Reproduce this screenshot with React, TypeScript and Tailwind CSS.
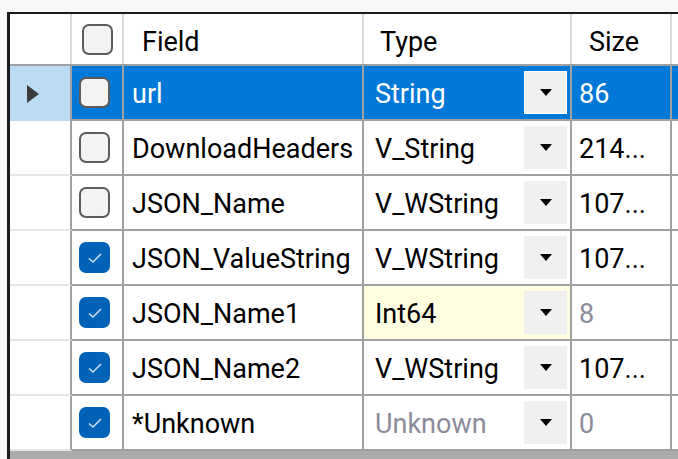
import React from 'react'

type Row = {
  checked: boolean
  field: string
  type: string
  size: string
  dim?: boolean
  yellow?: boolean
  sizeDim?: boolean
}

const ROWS: Row[] = [
  { checked: false, field: 'url', type: 'String', size: '86' },
  { checked: false, field: 'DownloadHeaders', type: 'V_String', size: '214...' },
  { checked: false, field: 'JSON_Name', type: 'V_WString', size: '107...' },
  { checked: true, field: 'JSON_ValueString', type: 'V_WString', size: '107...' },
  { checked: true, field: 'JSON_Name1', type: 'Int64', size: '8', yellow: true, sizeDim: true },
  { checked: true, field: 'JSON_Name2', type: 'V_WString', size: '107...' },
  { checked: true, field: '*Unknown', type: 'Unknown', size: '0', dim: true, sizeDim: true },
]

function CheckBox({ checked }: { checked: boolean }) {
  if (checked) {
    return (
      <div className="w-[31px] h-[31px] rounded-[7px] bg-[#0063b8] flex items-center justify-center">
        <svg width="16" height="12" viewBox="0 0 16 12">
          <path d="M2 6.5 L6 10 L14 2" fill="none" stroke="#c9dcf2" strokeWidth="1.6" />
        </svg>
      </div>
    )
  }
  return <div className="w-[31px] h-[31px] rounded-[7px] border-2 border-[#5c5c5c] bg-[#f3f3f3]" />
}

function Arrow() {
  return (
    <svg width="12" height="7" viewBox="0 0 12 7">
      <path d="M0 0 H12 L6 7 Z" fill="#000" />
    </svg>
  )
}

export default function App() {
  return (
    <div className="w-[678px] h-[459px] bg-[#f7f8fa] pt-[12px] pl-[7px] overflow-hidden" style={{ fontFamily: 'Roboto, sans-serif' }}>
      <div className="border-l-[3px] border-t-2 border-[#1c1c1c] bg-white h-[447px] flex flex-col text-[27px] leading-none text-black">
        <div className="flex h-[52px] shrink-0 border-b-2 border-[#a0a0a0]">
          <div className="w-[62px] border-r-2 border-[#d9d9d9]" />
          <div className="w-[52px] border-r-2 border-[#d9d9d9] flex items-center pl-[10px]">
            <CheckBox checked={false} />
          </div>
          <div className="w-[240px] border-r-2 border-[#d9d9d9] flex items-center pl-[18px] pt-[6px]">Field</div>
          <div className="w-[208px] border-r-2 border-[#d9d9d9] flex items-center pl-[16px] pt-[6px]">Type</div>
          <div className="w-[100px] border-r-2 border-[#d9d9d9] flex items-center pl-[17px] pt-[6px]">Size</div>
          <div className="flex-1" />
        </div>
        {ROWS.map((r, i) => {
          const sel = i === 0
          return (
            <div key={r.field} className="flex h-[55px] shrink-0">
              <div className={`w-[62px] border-r-2 border-[#a0a0a0] flex items-center pl-[16px] ${sel ? 'bg-[#bcdcf4]' : 'border-b-2 border-b-[#e6e6e6]'}`}>
                {sel && (
                  <svg width="14" height="20" viewBox="0 0 14 20">
                    <path d="M1 1 L13 10 L1 19 Z" fill="#3c3c3c" />
                  </svg>
                )}
              </div>
              <div className={`w-[52px] border-r-2 border-b-2 border-[#a0a0a0] flex items-center pl-[7px] ${sel ? 'bg-[#0078d7]' : ''}`}>
                <CheckBox checked={r.checked} />
              </div>
              <div className={`w-[240px] border-r-2 border-b-2 border-[#a0a0a0] flex items-center pl-[8px] pt-[3px] whitespace-nowrap ${sel ? 'bg-[#0078d7] text-white' : ''}`}>
                {r.field}
              </div>
              <div className={`w-[208px] border-r-2 border-b-2 border-[#a0a0a0] flex items-center justify-between pl-[11px] pr-[3px] ${sel ? 'bg-[#0078d7] text-white' : r.yellow ? 'bg-[#fffee1]' : ''} ${r.dim ? 'text-[#8b8b9a]' : ''}`}>
                <span className="pt-[3px]">{r.type}</span>
                <div className={`w-[43px] h-[43px] flex items-center justify-center bg-[#f0f0f0] ${sel ? 'border border-white' : ''}`}>
                  <Arrow />
                </div>
              </div>
              <div className={`w-[100px] border-r-2 border-b-2 border-[#a0a0a0] flex items-center pl-[7px] pt-[3px] ${sel ? 'bg-[#0078d7] text-white' : ''} ${r.sizeDim ? 'text-[#8b8b9a]' : ''}`}>
                {r.size}
              </div>
              <div className={`flex-1 border-b-2 border-[#a0a0a0] ${sel ? 'bg-[#0078d7]' : ''}`} />
            </div>
          )
        })}
        <div className="flex-1 bg-[#ababab]" />
      </div>
    </div>
  )
}
